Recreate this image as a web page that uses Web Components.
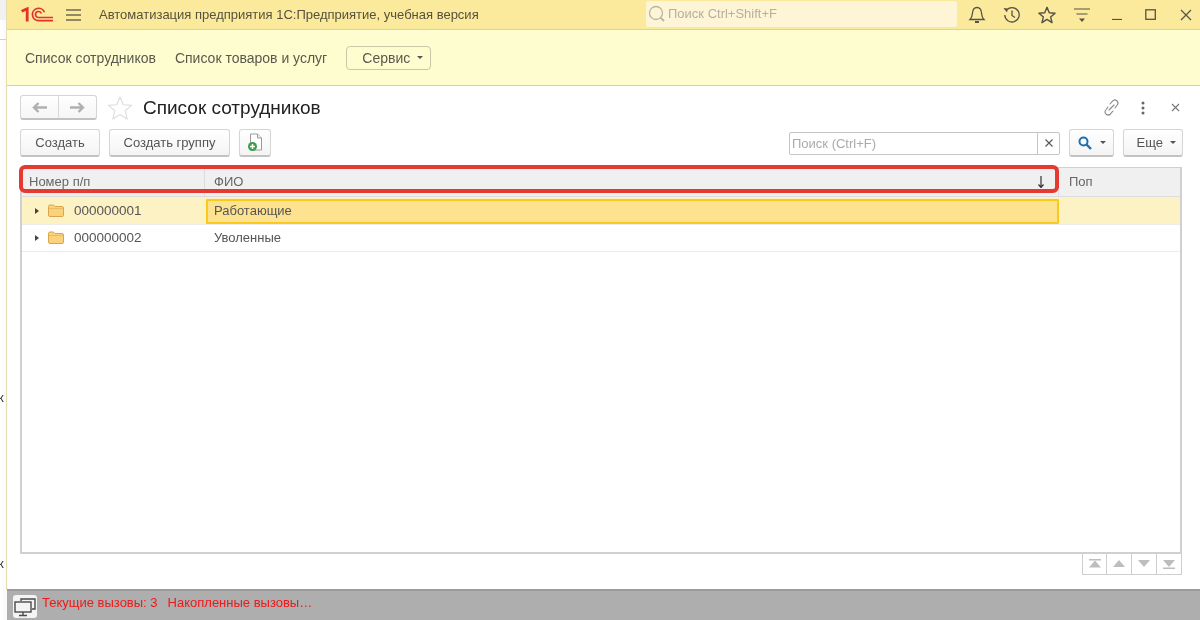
<!DOCTYPE html>
<html lang="ru"><head><meta charset="utf-8"><title>1С</title>
<style>
html,body{margin:0;padding:0;height:620px;overflow:hidden;background:#fff;font:13px "Liberation Sans",Arial,sans-serif;color:#4b4b4b}
</style></head><body>
<one-app></one-app>
<script>
function def(name, css, html){
  customElements.define(name, class extends HTMLElement{
    constructor(){super();const r=this.attachShadow({mode:'open'});r.innerHTML='<style>'+css+'</style>'+html;}
  });
}
const folder='<svg width="16" height="13" viewBox="0 0 16 13"><path d="M.5 2.500Q.5 1 2 1h3.500l1.500 1.500h7Q15.500 2.500 15.500 4v7.500Q15.500 12.500 14 12.500H2Q.5 12.500 .5 11z" fill="#fad27c" stroke="#dca44c"/><path d="M1 4.500h14" stroke="#e9bc69"/></svg>';
def('one-btn',`
:host{display:inline-flex;box-sizing:border-box;height:28px;align-items:center;justify-content:center;border:1px solid #d5d5d5;border-bottom:2px solid #c2c2c2;border-radius:3px;background:linear-gradient(#fff,#f4f4f4);color:#555;font-size:13px;gap:6px;flex:none}
`,`<slot></slot>`);
def('one-title',`
:host{display:flex;align-items:center;box-sizing:border-box;height:30px;background:#fbe99c;border-bottom:1px solid #e4d488;color:#5c5640;flex:none}
.logo{margin-left:14px;width:32px;height:15px;flex:none}
.menu{margin-left:13px;width:15px;height:12px;flex:none}
.t{margin-left:18px;width:547px;flex:none;font-size:13px;white-space:nowrap;color:#56523e}
.s{box-sizing:border-box;width:311px;height:26px;margin-top:-2px;background:#fdf5d6;border-radius:2px;display:flex;align-items:center;color:#b5b0a0;font-size:13px;flex:none;padding-left:2px;gap:2px;white-space:nowrap}
.i{position:relative;width:34.800px;height:30px;display:flex;align-items:center;justify-content:center;flex:none}
.first{margin-left:3px}
.down{padding-top:2px;box-sizing:border-box}
`,`
<svg class="logo" viewBox="0 0 32 15" fill="none" stroke="#e4322b">
 <path d="M.6 4.200L6.200 1.800V14.500" stroke-width="2.800"/>
 <path d="M32 13.700H17.500A6.200 6.200 0 1 1 23.400 5.200" stroke-width="1.700"/>
 <path d="M32 10.500H17.500A3 3 0 1 1 20.400 6.600" stroke-width="1.600"/>
</svg>
<svg class="menu" viewBox="0 0 15 12" stroke="#6d6a50" stroke-width="1.400"><path d="M0 1h15M0 6h15M0 11h15"/></svg>
<div class="t">Автоматизация предприятия 1С:Предприятие, учебная версия</div>
<div class="s"><svg width="18" height="18" viewBox="0 0 18 18" fill="none" stroke="#b9b4a6" stroke-width="1.300"><circle cx="8" cy="8" r="6.500"/><path d="M12.800 12.800L16 16" stroke-width="1.800"/></svg><span>Поиск Ctrl+Shift+F</span></div>
<div class="i first"><svg width="18" height="18" viewBox="0 0 18 18" fill="none" stroke="#55524a" stroke-width="1.300"><path d="M2 13.500h14c-1.600-1.600-2.200-3-2.400-6C13.400 4 11.600 1.500 9 1.500S4.600 4 4.400 7.500C4.200 10.500 3.600 11.900 2 13.500z"/><path d="M7 16h4" stroke-width="2"/></svg></div>
<div class="i"><svg width="18" height="18" viewBox="0 0 18 18" fill="none" stroke="#55524a" stroke-width="1.300"><path d="M3.200 4.500A7.200 7.200 0 1 1 1.800 9"/><path d="M9 4.500V9.500l3 2"/><path d="M.8 2.500l3.400.4-.6 3.200" fill="#55524a" stroke-width=".8"/></svg></div>
<div class="i"><svg width="18" height="18" viewBox="0 0 24 24" fill="none" stroke="#55524a" stroke-width="1.900" stroke-linejoin="round"><path d="M12 1.800l3 7.200 7.800.6-6 5 1.900 7.600L12 17.900l-6.700 4.300 1.900-7.600-6-5L9 9z"/></svg></div>
<div class="i down"><svg width="16" height="15" viewBox="0 0 16 15" stroke="#55524a" stroke-width="1.200"><path d="M0 1h16M2.500 6h11"/><path d="M5 10.500h6l-3 3.500z" fill="#55524a" stroke="none"/></svg></div>
<div class="i"><svg width="10" height="12" viewBox="0 0 10 12" stroke="#55524a" stroke-width="1.200" style="margin-top:-2px"><path d="M0 11.500h10"/></svg></div>
<div class="i"><svg width="12" height="12" viewBox="0 0 12 12" fill="none" stroke="#55524a" stroke-width="1.300"><rect x=".8" y=".8" width="9.500" height="9.500"/></svg></div>
<div class="i"><svg width="12" height="12" viewBox="0 0 12 12" fill="none" stroke="#55524a" stroke-width="1.200"><path d="M1 1l10 10M11 1L1 11"/></svg></div>
`);
def('one-sections',`
:host{display:flex;align-items:center;box-sizing:border-box;height:56px;padding-left:18px;background:#fefdd0;border-bottom:1px solid #cfcfc4;font-size:14px;color:#5a584c;flex:none}
span{margin-right:19px;white-space:nowrap}
.b{box-sizing:border-box;height:24px;width:85px;border:1px solid #c9c7a8;border-radius:4px;display:flex;align-items:center;justify-content:flex-end;gap:7px;padding-right:7px}
i{border:3px solid transparent;border-top:3px solid #555;border-bottom:0;display:block}
`,`<span>Список сотрудников</span><span>Список товаров и услуг</span><div class="b">Сервис <i></i></div>`);
def('one-grid',`
:host{display:block;box-sizing:border-box;height:387px;margin-right:1px;border:1px solid #d0d0d0;border-left-width:2px;border-right-width:2px;border-bottom-width:2px;flex:none;position:relative;color:#555;font-size:13px}
.r{display:grid;grid-template-columns:183px 854px 1fr;box-sizing:border-box}
.h{height:29px;background:#f0f0f0;border-bottom:1px solid #dcdcdc;color:#666;font-size:13px}
.h div{border-right:1px solid #dcdcdc;display:flex;align-items:center;padding:0 8px 2px 9px;position:relative}
.h div:first-child{padding-left:7px}
.h div:last-child{border:0;padding-left:10px}
.d{height:27px;border-bottom:1px solid #ececec;align-items:center}
.d>div{display:flex;align-items:center;height:100%;box-sizing:border-box;padding-bottom:1px}
.d .n{padding-left:13px;font-size:13.500px}
.d .c{padding-left:9px}
.sel{background:#fdf2c4;height:28px;padding-top:1px}
.sel .c{background:#fde38f;border:2px solid #fbc81c;padding-left:6px;height:25px;border-radius:1px;margin-left:1px}
.tri{border:3.500px solid transparent;border-left:4px solid #444;border-right:0;margin-right:9px}
svg{margin-right:10px;flex:none}
.arrow{position:absolute;right:13px;top:8px;margin:0}
.mark{position:absolute;left:-3px;top:-3px;width:1040px;height:28px;box-sizing:border-box;border:4px solid #e53a32;border-radius:6px;pointer-events:none}
`,`
<div class="r h"><div>Номер п/п</div><div>ФИО<svg class="arrow" width="8" height="12" viewBox="0 0 8 12" fill="none" stroke="#333" stroke-width="1.200"><path d="M4 0v11M1.500 8.500L4 11.500l2.500-3"/></svg></div><div>Поп</div></div>
<div class="r d sel"><div class="n"><span class="tri"></span>${folder}000000001</div><div class="c">Работающие</div><div></div></div>
<div class="r d"><div class="n"><span class="tri"></span>${folder}000000002</div><div class="c">Уволенные</div><div></div></div>
<div class="mark"></div>
`);
def('one-pager',`
:host{display:flex;justify-content:flex-end;flex:none;margin-right:1px}
div{box-sizing:border-box;width:25px;height:21px;border:1px solid #cfcfcf;border-top:0;display:flex;align-items:center;justify-content:center}
div+div{border-left:0}
`,`
<div><svg width="14" height="10" viewBox="0 0 14 10" fill="#bdbdbd"><rect x="1" y="0" width="12" height="1.500"/><path d="M7 1.500L13 8.500H1z"/></svg></div>
<div><svg width="14" height="8" viewBox="0 0 14 8" fill="#bdbdbd"><path d="M7 0l6 7H1z"/></svg></div>
<div><svg width="14" height="8" viewBox="0 0 14 8" fill="#bdbdbd"><path d="M7 7l6-7H1z"/></svg></div>
<div><svg width="14" height="10" viewBox="0 0 14 10" fill="#bdbdbd"><rect x="1" y="8.500" width="12" height="1.500"/><path d="M7 8L13 1H1z"/></svg></div>
`);
def('one-form',`
:host{display:flex;flex-direction:column;flex:1;min-height:0;padding:9px 17px 0 13px;background:#fff}
.top{display:flex;align-items:center;height:25px;flex:none;margin-right:-8px}
.nav{box-sizing:border-box;width:77px;height:25px;border:1px solid #d5d5d5;border-bottom:2px solid #c2c2c2;border-radius:3px;display:flex;background:linear-gradient(#fff,#f5f5f5)}
.nav div{flex:1;display:flex;align-items:center;justify-content:center}
.nav div+div{border-left:1px solid #d8d8d8}
.star{margin-left:10px;display:flex}
h1{font:400 19px "Liberation Sans",Arial,sans-serif;color:#222;margin:0 0 0 10px;flex:1;white-space:nowrap}
.ti{width:32px;display:flex;justify-content:center;flex:none}
.tb{display:flex;align-items:center;margin-top:9px;height:28px;flex:none}
.sp{flex:1}
.inp{box-sizing:border-box;width:271px;height:23px;border:1px solid #c5c5c5;border-radius:2px;display:flex;color:#aaa;font-size:13px;align-items:center;padding-left:2px}
.inp span{flex:1}
.inp b{width:21px;height:100%;border-left:1px solid #c5c5c5;display:flex;align-items:center;justify-content:center;font-weight:400;color:#555}
.caret{border:3px solid transparent;border-top:3px solid #555;border-bottom:0;display:block}
one-grid{margin-top:10px}
`,`
<div class="top">
 <div class="nav"><div><svg width="15" height="11" viewBox="0 0 15 11" fill="none" stroke="#b0b0b0" stroke-width="2.400"><path d="M15 5.500H2M6.500 1L2 5.500 6.500 10"/></svg></div><div><svg width="15" height="11" viewBox="0 0 15 11" fill="none" stroke="#b0b0b0" stroke-width="2.400"><path d="M0 5.500h13M8.500 1L13 5.500 8.500 10"/></svg></div></div>
 <div class="star"><svg width="26" height="26" viewBox="0 0 24 24" fill="none" stroke="#dedede" stroke-width="1.100" stroke-linejoin="round"><path d="M12 1.800l3 7.200 7.800.6-6 5 1.900 7.600L12 17.900l-6.700 4.300 1.900-7.600-6-5L9 9z"/></svg></div>
 <h1>Список сотрудников</h1>
 <div class="ti"><svg width="17" height="17" viewBox="0 0 17 17" fill="none" stroke="#888" stroke-width="1.100" stroke-linecap="round"><path d="M7 5l2.500-2.800a3 3 0 0 1 4.700 3.800L12 9"/><path d="M10 12l-2.500 2.800a3 3 0 0 1-4.700-3.800L5 8"/><path d="M6 11l5-5"/></svg></div>
 <div class="ti"><svg width="4" height="14" viewBox="0 0 4 14" fill="#666"><circle cx="2" cy="2" r="1.500"/><circle cx="2" cy="7" r="1.500"/><circle cx="2" cy="12" r="1.500"/></svg></div>
 <div class="ti"><svg width="9" height="9" viewBox="0 0 9 9" stroke="#777" stroke-width="1.100"><path d="M1 1l7 7M8 1L1 8"/></svg></div>
</div>
<div class="tb">
 <one-btn style="width:80px">Создать</one-btn>
 <one-btn style="width:121px;margin-left:9px">Создать группу</one-btn>
 <one-btn style="width:32px;margin-left:9px"><svg width="16" height="19" viewBox="0 0 16 19"><path d="M3.500 1h7l4 4v12h-11z" fill="#fff" stroke="#9a9a9a"/><path d="M10.500 1v4h4" fill="#eee" stroke="#9a9a9a"/><circle cx="5.500" cy="13.500" r="4.500" fill="#3aa047"/><path d="M5.500 11v5M3 13.500h5" stroke="#fff" stroke-width="1.500"/></svg></one-btn>
 <div class="sp"></div>
 <div class="inp"><span>Поиск (Ctrl+F)</span><b><svg width="8" height="8" viewBox="0 0 8 8" stroke="#555" stroke-width="1.100"><path d="M.5.500l7 7M7.500.500l-7 7"/></svg></b></div>
 <one-btn style="width:45px;margin-left:9px;gap:8px"><svg width="14" height="14" viewBox="0 0 14 14" fill="none" stroke="#1f6fae" stroke-width="2"><circle cx="5.500" cy="5.500" r="4"/><path d="M8.500 8.500l4.500 4.500" stroke-width="2.400"/></svg><i class="caret"></i></one-btn>
 <one-btn style="width:60px;margin-left:9px;gap:7px;justify-content:flex-end;padding-right:6px">Еще <i class="caret"></i></one-btn>
</div>
<one-grid></one-grid>
<one-pager></one-pager>
`);
def('one-status',`
:host{display:flex;align-items:flex-start;box-sizing:border-box;height:31px;background:#aeaeae;border-top:2px solid #9b9b9b;color:#f01818;font-size:13px;flex:none;padding-left:6px;white-space:nowrap}
.ic{width:24px;height:23px;margin-top:4px;background:#f4f4f4;border-radius:3px;display:flex;align-items:center;justify-content:center;margin-right:5px;flex:none}
span{margin-top:4px;line-height:16px}
span+span{margin-left:10px}
`,`<div class="ic"><svg width="22" height="20" viewBox="0 0 22 20" fill="none" stroke="#4a4a4a" stroke-width="1.400"><path d="M7 4V2h14v10h-3"/><rect x="1" y="5" width="16" height="10" fill="#f4f4f4"/><path d="M9 15v3M5 18.500h8"/></svg></div><span>Текущие вызовы: 3</span><span>Накопленные вызовы…</span>`);
def('one-edge',`
:host{display:block;width:7px;position:relative;overflow:hidden;background:linear-gradient(90deg,#fff 0,#fafafa 80%);flex:none}
.l{position:absolute;left:6px;top:0;bottom:30px;width:1px;background:#e7dcae}
span{position:absolute;left:-2px;font-size:13px;color:#333}
.top{position:absolute;left:0;top:0;width:6px;height:20px;background:#f1f1f1}
.line{position:absolute;left:0;top:39px;width:6px;height:1px;background:#cfcfcf}
`,`<div class="top"></div><div class="line"></div><div class="l"></div><span style="top:390px">к</span><span style="top:556px">к</span>`);
def('one-app',`
:host{display:flex;width:1200px;height:620px;overflow:hidden;filter:blur(.35px)}
.m{flex:1;min-width:0;display:flex;flex-direction:column}
`,`<one-edge></one-edge><div class="m"><one-title></one-title><one-sections></one-sections><one-form></one-form><one-status></one-status></div>`);
</script>
</body></html>
